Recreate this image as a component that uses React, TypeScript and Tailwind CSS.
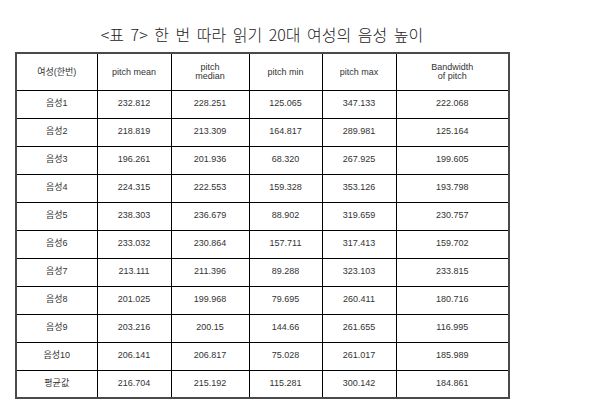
import React from 'react';

const rows: string[][] = [
  ['음성1', '232.812', '228.251', '125.065', '347.133', '222.068'],
  ['음성2', '218.819', '213.309', '164.817', '289.981', '125.164'],
  ['음성3', '196.261', '201.936', '68.320', '267.925', '199.605'],
  ['음성4', '224.315', '222.553', '159.328', '353.126', '193.798'],
  ['음성5', '238.303', '236.679', '88.902', '319.659', '230.757'],
  ['음성6', '233.032', '230.864', '157.711', '317.413', '159.702'],
  ['음성7', '213.111', '211.396', '89.288', '323.103', '233.815'],
  ['음성8', '201.025', '199.968', '79.695', '260.411', '180.716'],
  ['음성9', '203.216', '200.15', '144.66', '261.655', '116.995'],
  ['음성10', '206.141', '206.817', '75.028', '261.017', '185.989'],
  ['평균값', '216.704', '215.192', '115.281', '300.142', '184.861'],
];

const widths = ['w-[81px]', 'w-[74px]', 'w-[78px]', 'w-[73px]', 'w-[74px]', 'w-[113px]'];

export default function App() {
  return (
    <div className="w-[600px] h-[413px] bg-white font-['Liberation_Sans','Noto_Sans_CJK_KR',sans-serif] overflow-hidden">
      <div className="w-[494px] ml-[15px] pt-[23px] h-[52px] text-center text-[16px] leading-[22px] text-[#222] font-['Noto_Sans_CJK_KR',sans-serif] font-light [word-spacing:3px]">
        &lt;표 7&gt; 한 번 따라 읽기 20대 여성의 음성 높이
      </div>
      <table className="ml-[15px] border-collapse border-2 border-[#4a4a4a] text-[9px] text-[#333] table-fixed">
        <thead>
          <tr className="h-[37px]">
            <th className={`${widths[0]} border border-black font-normal leading-[10px]`}>여성(한번)</th>
            <th className={`${widths[1]} border border-black font-normal leading-[10px]`}>pitch mean</th>
            <th className={`${widths[2]} border border-black font-normal leading-[9px]`}>pitch<br />median</th>
            <th className={`${widths[3]} border border-black font-normal leading-[10px]`}>pitch min</th>
            <th className={`${widths[4]} border border-black font-normal leading-[10px]`}>pitch max</th>
            <th className={`${widths[5]} border border-black font-normal leading-[9px]`}>Bandwidth<br />of pitch</th>
          </tr>
        </thead>
        <tbody>
          {rows.map((r) => (
            <tr key={r[0]} className="h-[28px]">
              {r.map((c, i) => (
                <td key={i} className={`${widths[i]} border border-black text-center p-0`}>
                  {c}
                </td>
              ))}
            </tr>
          ))}
        </tbody>
      </table>
    </div>
  );
}
